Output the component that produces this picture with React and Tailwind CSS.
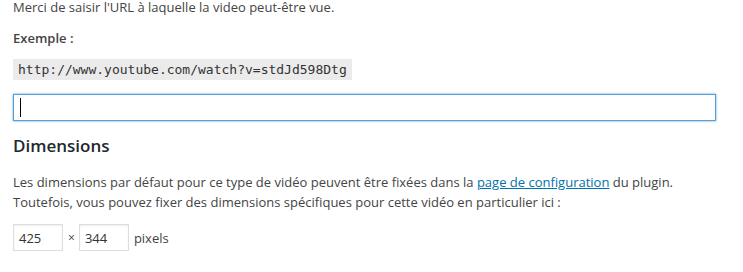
export default function App() {
  const sans = { fontFamily: '"Open Sans", "Noto Sans", sans-serif' };
  return (
    <div className="w-[743px] h-[272px] overflow-hidden bg-white text-[13px] text-[#444] leading-[20px]" style={sans}>
      <div className="flex flex-col pl-[13px] pr-[27px]">
        <p className="m-0 leading-[14px]">Merci de saisir l'URL à laquelle la video peut-être vue.</p>
        <p className="mt-[14px] font-semibold">Exemple :</p>
        <div className="mt-[11px]">
          <code className="inline-block bg-[#ebebeb] text-[#333] text-[13px] leading-[16px] pt-[3px] pb-[2px] px-[5px] font-['DejaVu_Sans_Mono',monospace]">
            http://www.youtube.com/watch?v=stdJd598Dtg
          </code>
        </div>
        <div className="mt-[14px] h-[27px] w-[703px] border border-[#5b9dd9] shadow-[0_0_2px_rgba(30,140,190,0.8)] bg-white flex items-center px-[6px]">
          <div className="w-px h-[19px] bg-black" />
        </div>
        <h2 className="mt-[13px] text-[17px] leading-[24px] font-semibold text-[#23282d]">Dimensions</h2>
        <p className="mt-[14px]">
          Les dimensions par défaut pour ce type de vidéo peuvent être fixées dans la{" "}
          <a className="text-[#0073aa] underline">page de configuration</a> du plugin.
          <br />
          Toutefois, vous pouvez fixer des dimensions spécifiques pour cette vidéo en particulier ici :
        </p>
        <div className="mt-[12px] flex items-center">
          <div className="w-[50px] h-[27px] border border-[#ddd] shadow-[inset_0_1px_2px_rgba(0,0,0,0.07)] flex items-center px-[5px] text-[#333]">425</div>
          <span className="ml-[5px] mr-[4px] text-[12px]">×</span>
          <div className="w-[50px] h-[27px] border border-[#ddd] shadow-[inset_0_1px_2px_rgba(0,0,0,0.07)] flex items-center px-[5px] text-[#333]">344</div>
          <span className="ml-[5px]">pixels</span>
        </div>
      </div>
    </div>
  );
}
